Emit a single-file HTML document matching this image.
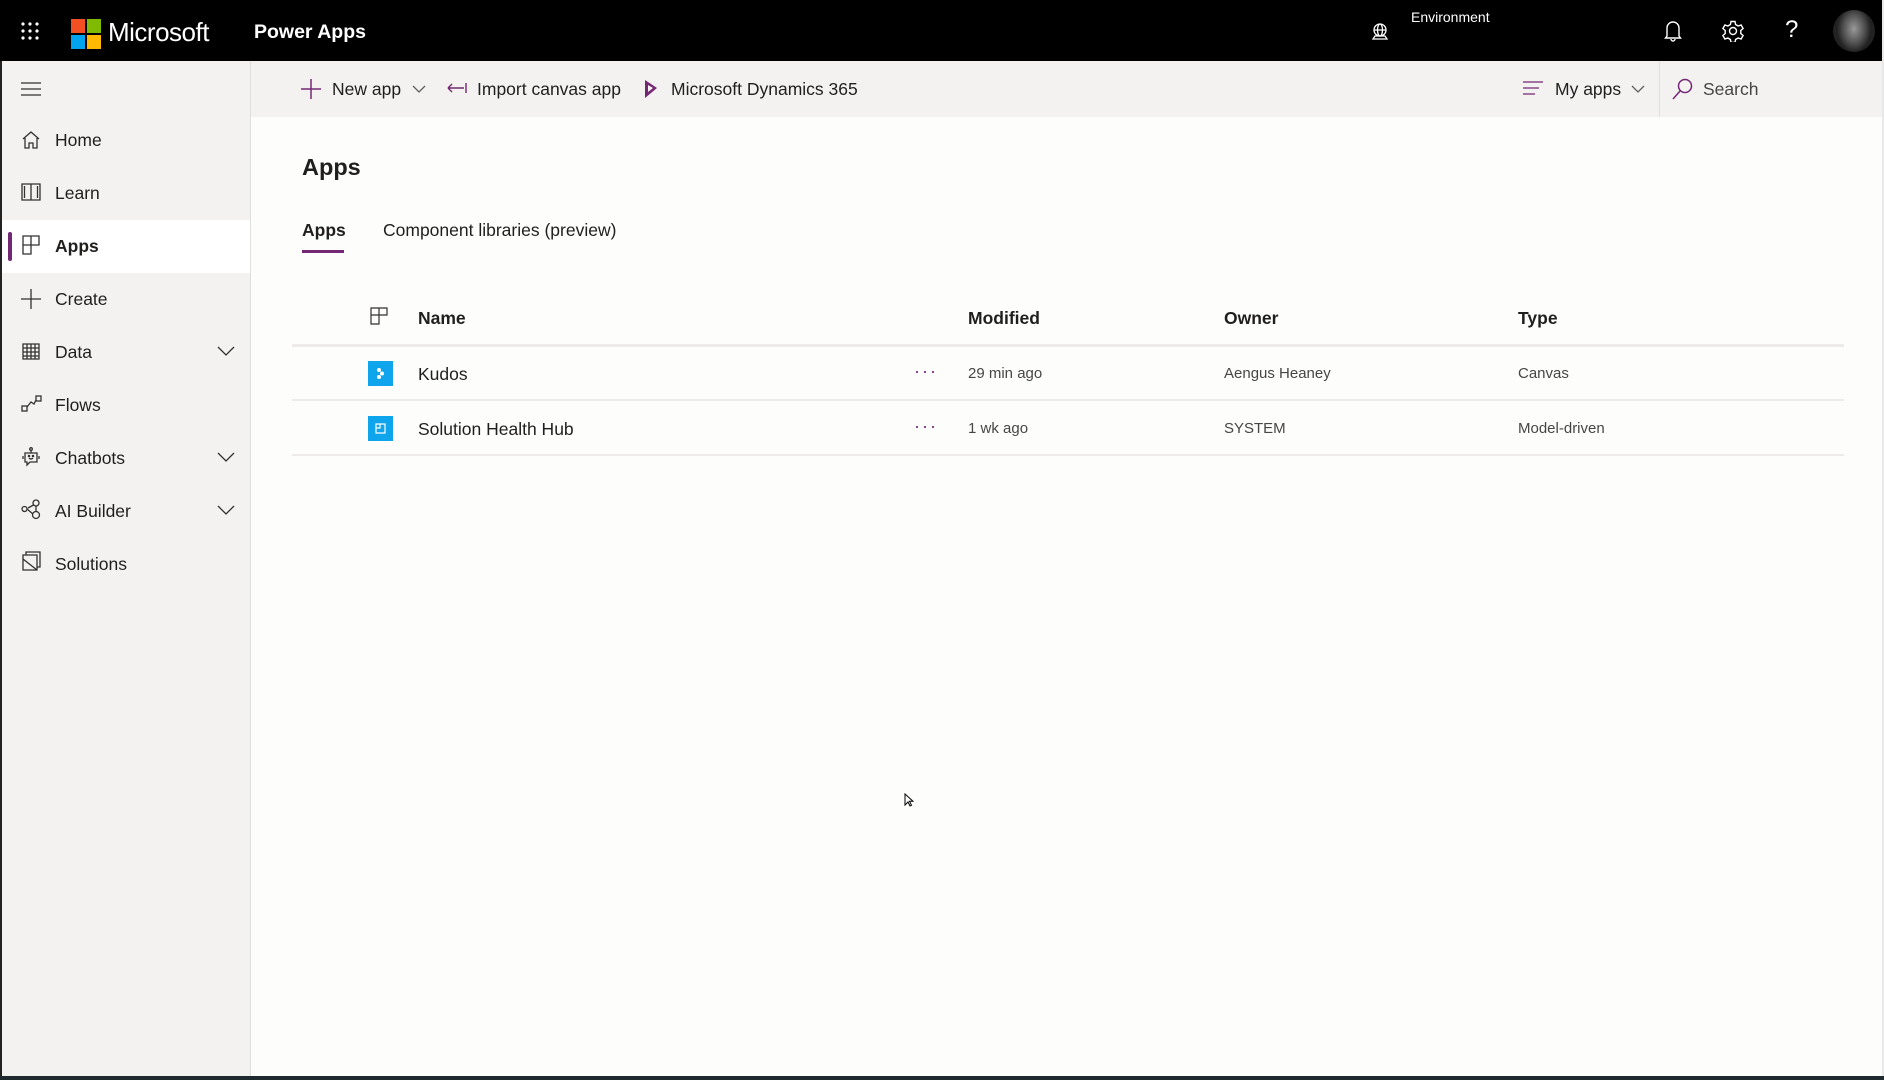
<!DOCTYPE html>
<html><head><meta charset="utf-8"><style>
*{margin:0;padding:0;box-sizing:border-box}
body{width:1884px;height:1080px;overflow:hidden;background:#fdfdfc;font-family:"Segoe UI","Liberation Sans",sans-serif;color:#201f1e;position:relative}
.a{position:absolute;white-space:nowrap}
#top{position:absolute;left:0;top:0;width:1884px;height:61px;background:#000}
#cmd{position:absolute;left:251px;top:61px;width:1633px;height:56px;background:#f3f2f1}
#side{position:absolute;left:0;top:61px;width:251px;height:1015px;background:#f3f2f1;border-right:1px solid #e1dfdd;border-left:2px solid #222}
.nav{position:absolute;left:55px;font-size:17.5px;color:#201f1e}
.ic{position:absolute}
.line{position:absolute;left:292px;width:1552px;height:2px;background:#edebe9}
.h{position:absolute;font-size:17.5px;font-weight:600;top:308px}
.c{position:absolute;font-size:15px;color:#484644}
</style></head><body>
<div id="top"></div>
<svg class="ic" style="left:21px;top:22px" width="18" height="18"><g fill="#fff"><circle cx="2" cy="2" r="1.6"/><circle cx="9" cy="2" r="1.6"/><circle cx="16" cy="2" r="1.6"/><circle cx="2" cy="9" r="1.6"/><circle cx="9" cy="9" r="1.6"/><circle cx="16" cy="9" r="1.6"/><circle cx="2" cy="16" r="1.6"/><circle cx="9" cy="16" r="1.6"/><circle cx="16" cy="16" r="1.6"/></g></svg>
<svg class="ic" style="left:71px;top:19px" width="30" height="30"><rect width="14" height="14" fill="#f25022"/><rect x="16" width="14" height="14" fill="#7fba00"/><rect y="16" width="14" height="14" fill="#00a4ef"/><rect x="16" y="16" width="14" height="14" fill="#ffb900"/></svg>
<div class="a" style="left:108px;top:17px;font-size:26px;color:#fff;letter-spacing:-0.5px">Microsoft</div>
<div class="a" style="left:254px;top:21px;font-size:19.5px;color:#fff;font-weight:600">Power Apps</div>
<svg class="ic" style="left:1370px;top:21px" width="20" height="20" fill="none" stroke="#fff" stroke-width="1.3"><circle cx="10" cy="9" r="6"/><ellipse cx="10" cy="9" rx="2.5" ry="6"/><path d="M4 9h12M3 18h14l-2-3H5z"/></svg>
<div class="a" style="left:1411px;top:9px;font-size:14px;color:#fff">Environment</div>
<svg class="ic" style="left:1664px;top:20px" width="18" height="22" fill="none" stroke="#fff" stroke-width="1.4"><path d="M3 16V8a6 6 0 0 1 12 0v8l1.5 2H1.5zM7 19a2 2 0 0 0 4 0"/></svg>
<svg class="ic" style="left:1722px;top:20px" width="22" height="22" fill="none" stroke="#fff" stroke-width="1.4"><circle cx="11" cy="11" r="3.5"/><path d="M9 1.5h4l.6 3 2.5 1.5 3-1 2 3.5-2.3 2v3l2.3 2-2 3.5-3-1-2.5 1.5-.6 3H9l-.6-3-2.5-1.5-3 1-2-3.5 2.3-2v-3l-2.3-2 2-3.5 3 1 2.5-1.5z"/></svg>
<div class="a" style="left:1785px;top:16px;font-size:24px;color:#fff;font-weight:300">?</div>
<div class="a" style="left:1833px;top:10px;width:42px;height:42px;border-radius:50%;background:radial-gradient(ellipse 40% 55% at 50% 45%,#999,#555 60%,#222)"></div>

<div id="cmd"></div>
<div class="a" style="left:1659px;top:61px;width:1px;height:56px;background:#e1dfdd"></div>
<svg class="ic" style="left:301px;top:79px" width="20" height="20" stroke="#742774" stroke-width="1.5"><path d="M10 0v20M0 10h20"/></svg>
<div class="a" style="left:332px;top:79px;font-size:17.5px">New app</div>
<svg class="ic" style="left:412px;top:85px" width="14" height="8" fill="none" stroke="#605e5c" stroke-width="1.3"><path d="M1 1l6 6 6-6"/></svg>
<svg class="ic" style="left:447px;top:82px" width="20" height="12" fill="none" stroke="#742774" stroke-width="1.4"><path d="M19 1v10M17 6H1M1 6l4-4M1 6l4 4"/></svg>
<div class="a" style="left:477px;top:79px;font-size:17.5px">Import canvas app</div>
<svg class="ic" style="left:644px;top:79px" width="14" height="20"><path d="M1 1l12 8-12 10z" fill="#742774"/><path d="M4 6l5 3-5 4z" fill="#f3f2f1"/></svg>
<div class="a" style="left:671px;top:79px;font-size:17.5px">Microsoft Dynamics 365</div>
<svg class="ic" style="left:1523px;top:81px" width="20" height="14" stroke="#742774" stroke-width="1.3"><path d="M0 1h20M0 7h16M0 13h12"/></svg>
<div class="a" style="left:1555px;top:79px;font-size:17.5px">My apps</div>
<svg class="ic" style="left:1631px;top:85px" width="14" height="8" fill="none" stroke="#605e5c" stroke-width="1.3"><path d="M1 1l6 6 6-6"/></svg>
<svg class="ic" style="left:1672px;top:78px" width="22" height="22" fill="none" stroke="#742774" stroke-width="1.5"><circle cx="13" cy="8" r="6.5"/><path d="M8.5 12.5L1 21"/></svg>
<div class="a" style="left:1703px;top:79px;font-size:17.5px;color:#484644">Search</div>

<div id="side"></div>
<svg class="ic" style="left:21px;top:82px" width="20" height="14" stroke="#323130" stroke-width="1.3"><path d="M0 1h20M0 7h20M0 13h20"/></svg>
<div class="a" style="left:2px;top:220px;width:248px;height:53px;background:#fff"></div>
<div class="a" style="left:8px;top:232px;width:4px;height:29px;border-radius:2px;background:#742774"></div>
<svg class="ic" style="left:22px;top:131px" width="18" height="18" fill="none" stroke="#323130" stroke-width="1.3"><path d="M1 8L9 1l8 7M3 7v10h4v-5h4v5h4V7"/></svg>
<svg class="ic" style="left:21px;top:183px" width="20" height="18" fill="none" stroke="#323130" stroke-width="1.3"><path d="M1 1h18v16H1zM10 1v16M3.5 3v12M16.5 3v12"/></svg>
<svg class="ic" style="left:22px;top:235px" width="18" height="20" fill="none" stroke="#323130" stroke-width="1.3"><path d="M1 1h16v9H9v9H1zM1 10h8V1"/></svg>
<svg class="ic" style="left:21px;top:289px" width="20" height="20" stroke="#323130" stroke-width="1.3"><path d="M10 0v20M0 10h20"/></svg>
<svg class="ic" style="left:22px;top:343px" width="18" height="17" fill="none" stroke="#323130" stroke-width="1.3"><path d="M1 1h16v15H1zM1 5h16M1 9h16M1 13h16M5 1v15M9 1v15M13 1v15"/></svg>
<svg class="ic" style="left:21px;top:395px" width="22" height="18" fill="none" stroke="#323130" stroke-width="1.3"><rect x="1" y="11" width="5" height="5"/><rect x="15" y="1" width="5" height="5"/><path d="M6 12l4-5 3 2 2-4"/></svg>
<svg class="ic" style="left:22px;top:447px" width="18" height="20" fill="none" stroke="#323130" stroke-width="1.3"><circle cx="9" cy="2" r="1.3"/><path d="M9 3.5v2M3 6h12v9H8l-3 3v-3H3zM1 9v3M17 9v3M7 11q2 2 4 0"/><circle cx="7" cy="9" r=".6"/><circle cx="11" cy="9" r=".6"/></svg>
<svg class="ic" style="left:21px;top:499px" width="22" height="22" fill="none" stroke="#323130" stroke-width="1.3"><circle cx="3.5" cy="10" r="2.5"/><circle cx="15" cy="4" r="3"/><circle cx="15" cy="16" r="3.5"/><path d="M6 10l6 5M12.5 6L7 9M15 7v5.5"/></svg>
<svg class="ic" style="left:22px;top:551px" width="20" height="20" fill="none" stroke="#323130" stroke-width="1.3"><path d="M1 4h14v15H1zM4 4V1h14v15h-3M1 8l14 11"/></svg>
<div class="nav" style="top:130px">Home</div>
<div class="nav" style="top:183px">Learn</div>
<div class="nav" style="top:236px;font-weight:600">Apps</div>
<div class="nav" style="top:289px">Create</div>
<div class="nav" style="top:342px">Data</div>
<div class="nav" style="top:395px">Flows</div>
<div class="nav" style="top:448px">Chatbots</div>
<div class="nav" style="top:501px">AI Builder</div>
<div class="nav" style="top:554px">Solutions</div>
<svg class="ic" style="left:217px;top:346px" width="18" height="10" fill="none" stroke="#323130" stroke-width="1.3"><path d="M1 1l8 8 8-8"/></svg>
<svg class="ic" style="left:217px;top:452px" width="18" height="10" fill="none" stroke="#323130" stroke-width="1.3"><path d="M1 1l8 8 8-8"/></svg>
<svg class="ic" style="left:217px;top:505px" width="18" height="10" fill="none" stroke="#323130" stroke-width="1.3"><path d="M1 1l8 8 8-8"/></svg>

<div class="a" style="left:302px;top:154px;font-size:23.5px;font-weight:600">Apps</div>
<div class="a" style="left:302px;top:220px;font-size:17.5px;font-weight:600">Apps</div>
<div class="a" style="left:302px;top:250px;width:42px;height:3px;background:#742774"></div>
<div class="a" style="left:383px;top:220px;font-size:17.5px">Component libraries (preview)</div>

<svg class="ic" style="left:370px;top:307px" width="18" height="18" fill="none" stroke="#323130" stroke-width="1.2"><path d="M1 1h16v7H9v9H1zM1 8h8V1"/></svg>
<div class="h" style="left:418px">Name</div>
<div class="h" style="left:968px">Modified</div>
<div class="h" style="left:1224px">Owner</div>
<div class="h" style="left:1518px">Type</div>
<div class="line" style="top:344px;height:3px"></div>
<div class="line" style="top:399px"></div>
<div class="line" style="top:454px"></div>

<div class="a" style="left:368px;top:361px;width:25px;height:25px;background:#0ea5ec"></div>
<svg class="ic" style="left:368px;top:361px" width="25" height="25" fill="#fff"><circle cx="11" cy="9" r="2"/><circle cx="14" cy="12.5" r="2"/><circle cx="11" cy="16" r="2"/></svg>
<div class="a" style="left:368px;top:416px;width:25px;height:25px;background:#0ea5ec"></div>
<svg class="ic" style="left:368px;top:416px" width="25" height="25" fill="none" stroke="#fff" stroke-width="1.2"><path d="M8 8h9v9H8zM8 12h4V8"/></svg>
<div class="a" style="left:418px;top:364px;font-size:17.5px">Kudos</div>
<div class="a" style="left:418px;top:419px;font-size:17.5px">Solution Health Hub</div>
<div class="a" style="left:914px;top:361px;font-size:18px;color:#742774;letter-spacing:2px">···</div>
<div class="a" style="left:914px;top:416px;font-size:18px;color:#742774;letter-spacing:2px">···</div>
<div class="c" style="left:968px;top:365px">29 min ago</div>
<div class="c" style="left:968px;top:420px">1 wk ago</div>
<div class="c" style="left:1224px;top:365px">Aengus Heaney</div>
<div class="c" style="left:1224px;top:420px">SYSTEM</div>
<div class="c" style="left:1518px;top:365px">Canvas</div>
<div class="c" style="left:1518px;top:420px">Model-driven</div>

<svg class="ic" style="left:904px;top:793px" width="10" height="14"><path d="M1 1v11l3-3 2 4 1.5-.7-2-4H9z" fill="#fff" stroke="#000" stroke-width="1"/></svg>
<div class="a" style="left:1882px;top:0;width:2px;height:1080px;background:#e8e8e8"></div>
<div class="a" style="left:0;top:1076px;width:1884px;height:4px;background:#1f2a2e"></div>
</body></html>
